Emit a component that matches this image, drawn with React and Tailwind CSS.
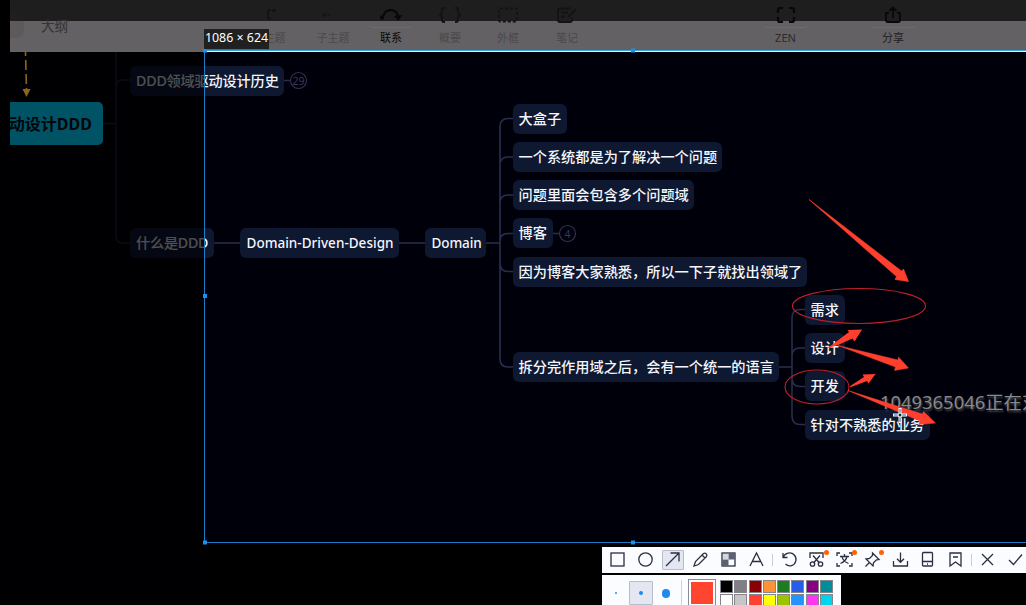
import React from 'react';

const NODES = [
  { t: 'DDD领域驱动设计历史', x: 130, y: 66, w: 154, pad: 'pl-[6px]', track: 'tracking-[-0.18px]' },
  { t: '什么是DDD', x: 130, y: 228, w: 84, pad: 'pl-[6px]', track: 'tracking-[-0.25px]' },
  { t: 'Domain-Driven-Design', x: 240, y: 228, w: 159, pad: 'pl-[6.5px]', track: 'tracking-[0.02px]', en: true },
  { t: 'Domain', x: 425, y: 228, w: 61, pad: 'pl-[6.5px]', track: 'tracking-[-0.1px]', en: true },
  { t: '大盒子', x: 513, y: 104, w: 54 },
  { t: '一个系统都是为了解决一个问题', x: 513, y: 142, w: 209 },
  { t: '问题里面会包含多个问题域', x: 513, y: 180, w: 181 },
  { t: '博客', x: 513, y: 218, w: 40 },
  { t: '因为博客大家熟悉，所以一下子就找出领域了', x: 513, y: 257, w: 294 },
  { t: '拆分完作用域之后，会有一个统一的语言', x: 513, y: 352, w: 266 },
  { t: '需求', x: 805, y: 295, w: 40 },
  { t: '设计', x: 805, y: 333, w: 40 },
  { t: '开发', x: 805, y: 371, w: 40 },
  { t: '针对不熟悉的业务', x: 805, y: 410, w: 125 },
];

function Node({ n }) {
  return (
    <div
      className={`absolute flex h-[29.5px] items-center whitespace-nowrap rounded-[6px] bg-[#0e1831] font-medium text-[#f4f6fb] ${n.pad || 'pl-[5.5px]'} ${n.track || ''} ${n.en ? 'text-[13.5px]' : 'text-[14.2px]'}`}
      style={{ left: n.x, top: n.y, width: n.w }}
    >
      {n.t}
    </div>
  );
}

function Connectors() {
  return (
    <svg className="absolute inset-0" width="1026" height="605" fill="none" stroke="#2a2e4a" strokeWidth="1.6">
      <path d="M103 123.5H116M116 51V236Q116 243 123 243H130M130 80H123Q116 80 116 87" stroke="#202238" />
      <path d="M214 243H240M399 243H425M486 243H500M284 80.5H290M553 233.5H559" />
      <path d="M513 118.5H508Q500 118.5 500 127V359Q500 367 508 367H513M513 157H508Q500 157 500 165M513 195H508Q500 195 500 203M513 233.5H508Q500 233.5 500 241M500 263Q500 271.5 508 271.5H513" />
      <path d="M779 367H792M805 309.5H800Q792 309.5 792 318V416Q792 424.5 800 424.5H805M805 348H800Q792 348 792 356M792 378Q792 386.5 800 386.5H805" />
      <g strokeWidth="1.1" stroke="#35305a">
        <circle cx="298.500" cy="80.500" r="8" />
        <circle cx="567.500" cy="233.500" r="8" />
      </g>
      <g fill="#3a3758" stroke="none" fontSize="10.5" textAnchor="middle">
        <text x="298.500" y="84.500">29</text>
        <text x="567.500" y="237.500">4</text>
      </g>
    </svg>
  );
}

function Tool({ label, x, active, children }) {
  return (
    <div className={`absolute top-0 flex w-[60px] -translate-x-1/2 flex-col items-center pt-[6px] ${active ? 'text-[#080808]' : 'text-[#4a494b]'}`} style={{ left: x }}>
      <svg width="44" height="23" viewBox="0 0 44 23" fill="none" stroke={active ? '#080808' : '#131313'} strokeWidth={active ? 2.2 : 1.8}>{children}</svg>
      <span className="mt-[1px] whitespace-nowrap text-[11px] leading-[16px]">{label}</span>
    </div>
  );
}

function Header() {
  return (
    <header className="absolute left-0 top-0 h-[52px] w-[1026px]">
      <div className="h-[21px] bg-[#1e1e1e]" />
      <div className="ml-[10px] h-[31px] bg-[#636163]" />
      <div className="absolute left-0 top-0 h-[52px] w-[10px] bg-black" />
      <div className="absolute left-[10px] top-[12px] h-[26px] w-[14px] rounded-r-[8px] bg-[#3a2022]/12" />
      <span className="absolute left-[41px] top-[16px] text-[13.6px] leading-[20px] text-[#343335]">大纲</span>
      <Tool label="主题" x={274.5}><path d="M18 4H17Q15 4 15 6V11Q15 13 17 13H18" /><rect x="19.500" y="3" width="3" height="3" fill="#111" stroke="none" /></Tool>
      <Tool label="子主题" x={333}><g stroke="#151515"><path d="M11 9H15" strokeWidth="3" /><path d="M16 9H19" strokeWidth="1.500" /></g></Tool>
      <Tool label="联系" x={391} active><path d="M14 11C16 2 27 2 29 10" /><rect x="11" y="9.500" width="4" height="4" fill="#080808" stroke="none" /><path d="M25 10L33 9L29.500 15Z" fill="#080808" stroke="none" /></Tool>
      <Tool label="概要" x={450}><path d="M17 2H16Q14 2 14 4V7L12 9L14 11V14Q14 16 16 16H17M27 2H28Q30 2 30 4V7L32 9L30 11V14Q30 16 28 16H27" /></Tool>
      <Tool label="外框" x={508}><rect x="13" y="2.500" width="18" height="13" rx="1" strokeDasharray="3 2" /></Tool>
      <Tool label="笔记" x={567}><path d="M26 2.500H15Q13 2.500 13 4.500V14Q13 16 15 16H25Q27 16 27 14V11M16 6.500H23M16 10.500H20M31 3L23 11" /></Tool>
      <Tool label={<span className="text-[#2b2a2c]">ZEN</span>} x={785.5}><path stroke="#080808" strokeWidth="2.200" d="M14 7V4Q14 2 16 2H19M25 2H28Q30 2 30 4V7M30 11V14Q30 16 28 16H25M19 16H16Q14 16 14 14V11" /></Tool>
      <Tool label={<span className="text-[#1e1d1f]">分享</span>} x={893}><path stroke="#080808" d="M18 7H15V14Q15 16 17 16H27Q29 16 29 14V7H26M22 12V2M18.500 5L22 1.500L25.500 5" /></Tool>
      <div className="absolute left-[370px] top-[21px] h-[7px] w-[43px] rounded-b-[4px] border-b border-[#6e6c6e]" />
      <div className="absolute left-[763px] top-[21px] h-[7px] w-[45px] rounded-b-[4px] border-b border-[#6e6c6e]" />
      <div className="absolute left-[871px] top-[21px] h-[7px] w-[45px] rounded-b-[4px] border-b border-[#6e6c6e]" />
    </header>
  );
}

function Annotations() {
  return (
    <svg className="absolute inset-0" width="1026" height="605" fill="#ff3f2e">
      <g fill="none" stroke="#bf1f2b" strokeWidth="1.1">
        <ellipse cx="859" cy="306" rx="66.500" ry="17.500" />
        <ellipse cx="817" cy="387" rx="32" ry="17" />
      </g>
      <path stroke="#ff3f2e" strokeWidth="0.600" d="M809 199.500L901.500 271L903.500 269L908.500 281.500L895 279.500L896.500 276.500Z" />
      <path d="M827 348.500L849 332L847.500 330L862 329.500L854.500 341.500L852.500 338.500L838 345Z" />
      <path stroke="#ff3f2e" strokeWidth="0.500" d="M838 345.500L898 360L898.500 357L908.500 368L894.500 370.500L895.500 367Z" />
      <path d="M849.500 386.500L864 377L862.500 374.500L875.500 374L868.500 383.500L867 381L851 387Z" />
      <path stroke="#ff3f2e" strokeWidth="0.500" d="M848 390.500L922.500 414L923.500 411.500L935.500 423L919 424.500L920 421Z" />
      <g fill="none">
        <path d="M900 408V423M893 415H907" stroke="#f4fbff" strokeWidth="3" />
        <path d="M900 409V422M894 415H906" stroke="#21638a" strokeWidth="1" />
        <circle cx="900" cy="415" r="2" fill="#0b2740" stroke="#fff" />
      </g>
    </svg>
  );
}

function Selection() {
  return (
    <svg className="absolute inset-0" width="1026" height="605">
      <path d="M204.500 542.500V50.500M204.500 542.500H1026" stroke="#1c7cc4" fill="none" />
      <path d="M204 50.500H1026" stroke="#3ba3de" />
      <path d="M205 51.500H1026" stroke="#edf8fb" />
      <g fill="#1a91f0">
        <rect x="203" y="48.500" width="4" height="4" />
        <rect x="631" y="48.500" width="4" height="4" />
        <rect x="203" y="294" width="4" height="4" />
        <rect x="203" y="540.500" width="4" height="4" />
        <rect x="631" y="540.500" width="4" height="4" />
      </g>
    </svg>
  );
}

const ICONS = [
  { id: 'rect', d: <rect x="3" y="3" width="13" height="13" /> },
  { id: 'circle', d: <circle cx="9.500" cy="9.500" r="6.700" /> },
  { id: 'arrow', active: true, d: <path d="M3 16L16 3M7.500 3H16V11.500" /> },
  { id: 'pencil', d: <path d="M3 16L4.500 11.500L12.500 3.500Q14 2.500 15.200 3.800Q16.500 5 15.500 6.500L7.500 14.500ZM11 5L14 8" /> },
  { id: 'mosaic', d: <><rect x="3" y="3" width="13" height="13" /><path d="M9.500 3H16V9.500H9.500ZM3 9.500H9.500V16H3Z" fill="#5d6273" stroke="none" /><path d="M4 4H9V9H4Z" fill="#d5d8e0" stroke="none" /></> },
  { id: 'text', d: <path d="M3 16L9.500 3L16 16M5.500 11.500H13.500" /> },
  { sep: true, w: 'w-[5.4px]' },
  { id: 'undo', d: <path d="M3 3V7.500H7.500M3.200 7.200C5 2.700 11 1.500 14.300 5C17.500 8.500 16 14.500 11.500 15.700C9 16.400 7 15.500 5.500 14" /> },
  { id: 'cut', dot: true, d: <><path d="M3 8V3H16V8M6 5.500L12.500 13M13 5.500L6.500 13" /><circle cx="5.500" cy="14" r="2.200" /><circle cx="13.500" cy="14" r="2.200" /></> },
  { id: 'translate', dot: true, d: <path d="M2 6V3H5M14 3H17V6M17 13V16H14M5 16H2V13M5 6.500H14M9.500 4V6.500M5.500 13.500C9 12 11.500 9 12 6.500M7 6.500C7.500 9.500 10 12 13.500 13.500" /> },
  { id: 'pin', dot: true, d: <path d="M9.500 3L16 9.500L13.500 9.800L10.500 12.800L10 16L3 9L6.500 8.500L9.500 5.500ZM6.500 12.500L2.500 16.500" /> },
  { id: 'save', d: <path d="M2.500 11V16H16.500V11M9.500 2.500V12M6 8.800L9.500 12.300L13 8.800" /> },
  { id: 'phone', d: <><rect x="4.500" y="2.500" width="10" height="13.500" rx="1" /><path d="M4.500 11.500H14.500M9 14H10" /></> },
  { id: 'bookmark', d: <path d="M4 3H15V16L9.500 12L4 16ZM7 7H12" /> },
  { sep: true, w: 'w-[4.3px]' },
  { id: 'close', d: <path d="M4 4L15 15M15 4L4 15" /> },
  { id: 'ok', d: <path d="M3 10L7.500 14.500L16 4.500" /> },
];

function CaptureBar() {
  return (
    <div className="flex h-[26px] w-[440px] items-center bg-[#fafcff] pl-[1.4px]">
      {ICONS.map((i, k) =>
        i.sep ? (
          <div key={k} className={`flex shrink-0 justify-center ${i.w}`}><span className="h-[12px] w-px bg-[#c9ccd4]" /></div>
        ) : (
          <div key={k} className="flex w-[27.75px] shrink-0 justify-center">
            <div className={`relative -mt-px flex h-[20px] w-[22px] items-center justify-center ${i.active ? 'rounded-[1px] border border-[#b9bdca] bg-[#e4e7f1]' : ''}`}>
              <svg className="shrink-0" width="19" height="19" viewBox="0 0 19 19" fill="none" stroke="#2b2f40" strokeWidth="1.3">{i.d}</svg>
              {i.dot && <span className="absolute -right-px top-0 size-[5px] rounded-full bg-[#ff6200]" />}
            </div>
          </div>
        )
      )}
    </div>
  );
}

const COLORS = [
  'bg-black', 'bg-[#808084]', 'bg-[#8b0000]', 'bg-[#ff9233]', 'bg-[#207a20]', 'bg-[#285de8]', 'bg-[#8a0082]', 'bg-[#008d9b]',
  'bg-white', 'bg-[#c6c5c8]', 'bg-[#ff4030]', 'bg-[#ffff00]', 'bg-[#9bc400]', 'bg-[#2592ff]', 'bg-[#ff35f4]', 'bg-[#00d4ec]',
];

function StyleBar() {
  return (
    <div className="mt-[2px] flex h-[30px] w-[239px] overflow-hidden bg-[#fafcff]">
      <div className="flex w-[27px] justify-center pt-[17px]"><span className="size-[2px] rounded-full bg-[#208bea]" /></div>
      <div className="mt-[6px] flex h-[24px] w-[24px] items-center justify-center rounded-[1px] border border-[#b9bdca] bg-[#e4e7f1]"><span className="size-[4px] rounded-full bg-[#208bea]" /></div>
      <div className="flex w-[26px] justify-center pt-[14px]"><span className="size-[8.500px] rounded-full bg-[#208bea]" /></div>
      <span className="ml-[2px] mt-[5px] h-[25px] w-px bg-[#d0d3da]" />
      <div className="ml-[6px] mt-[4px] h-[28px] w-[28px] shrink-0 border border-[#8a8c92] bg-white p-[2px]"><div className="h-full w-full bg-[#ff4530]" /></div>
      <div className="ml-[4px] mt-[5px] grid shrink-0 grid-cols-[repeat(8,13px)] grid-rows-[repeat(2,13px)] gap-x-[1.3px] gap-y-px">
        {COLORS.map((c) => <span key={c} className={`border border-[#85858c] ${c}`} />)}
      </div>
    </div>
  );
}

export default function App() {
  return (
    <div className="relative h-[605px] w-[1026px] overflow-hidden bg-black font-['Noto_Sans','Noto_Sans_CJK_SC',sans-serif]">
      <div className="absolute left-[205px] top-[52px] h-[490px] w-[821px] bg-[#00000b]" />
      <Connectors />
      {NODES.map((n) => <Node key={n.t} n={n} />)}
      <div className="absolute left-0 top-[52px] h-[553px] w-[204px] bg-[#000003]/68" />
      <div className="absolute left-[10px] top-[102px] flex h-[43px] w-[93px] items-center justify-end overflow-hidden whitespace-nowrap rounded-r-[5px] bg-[#005365] pr-[11px] text-[16px] font-bold text-[#020608]">动设计DDD</div>
      <svg className="absolute left-[18px] top-[51px]" width="18" height="48">
        <path d="M7.500 1L8.500 38" stroke="#8e651d" strokeWidth="1.600" strokeDasharray="10 4" strokeDashoffset="6" />
        <path d="M4.500 38H12.500L8.500 46Z" fill="#8e651d" />
      </svg>
      <Header />
      <Selection />
      <div className="absolute left-[204px] top-[29px] flex h-[20px] w-[65px] items-center justify-center whitespace-nowrap bg-[#202020] pb-px text-[12.4px] text-white">1086 × 624</div>
      <div className="absolute left-[880px] top-[390px] whitespace-nowrap text-[18.4px] leading-[24px] text-[#88888c] [text-shadow:1px_2px_2px_#444]">1049365046正在对</div>
      <Annotations />
      <div className="absolute left-[602px] top-[547px]">
        <CaptureBar />
        <StyleBar />
      </div>
    </div>
  );
}
